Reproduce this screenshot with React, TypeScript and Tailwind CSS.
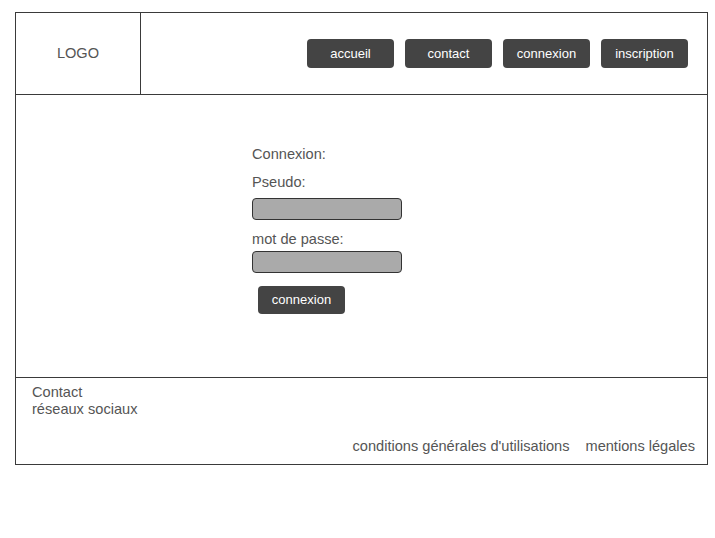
const font = { fontFamily: '"Liberation Sans", Arial, sans-serif' };

const navItems = ["accueil", "contact", "connexion", "inscription"];

function DarkButton({ label }: { label: string }) {
  return (
    <button className="h-[29px] w-[87px] rounded-[4px] bg-[#444444] text-[13px] text-white">
      {label}
    </button>
  );
}

export default function App() {
  return (
    <div className="min-h-screen bg-white pl-[15px] pt-[12px]" style={font}>
      <div className="w-[693px] border border-[#3a3a3a] text-[#555555]">
        {/* Header */}
        <header className="flex h-[82px] border-b border-[#3a3a3a]">
          <div className="flex w-[125px] items-center justify-center border-r border-[#3a3a3a] text-[14.6px]">
            LOGO
          </div>
          <nav className="flex flex-1 items-center justify-end gap-[11px] pr-[19px]">
            {navItems.map((n) => (
              <DarkButton key={n} label={n} />
            ))}
          </nav>
        </header>

        {/* Login form */}
        <main className="h-[283px] border-b border-[#3a3a3a] pl-[236px] pt-[49px] text-[14.6px] leading-[20px]">
          <div>Connexion:</div>
          <div className="mt-[8px]">Pseudo:</div>
          <div className="mt-[6px] h-[22px] w-[150px] rounded-[4px] border border-[#333333] bg-[#aaaaaa]" />
          <div className="mt-[9px]">mot de passe:</div>
          <div className="mt-[2px] h-[22px] w-[150px] rounded-[4px] border border-[#333333] bg-[#aaaaaa]" />
          <div className="ml-[6px] mt-[13px]">
            <button className="h-[28px] w-[87px] rounded-[4px] bg-[#444444] text-[13px] text-white">
              connexion
            </button>
          </div>
        </main>

        {/* Footer */}
        <footer className="flex h-[86px] flex-col justify-between pb-[9px] pl-[16px] pr-[12px] pt-[6px] text-[14.6px] leading-[17px]">
          <div>
            <div>Contact</div>
            <div>réseaux sociaux</div>
          </div>
          <div className="flex justify-end gap-[16px]">
            <span>conditions générales d'utilisations</span>
            <span>mentions légales</span>
          </div>
        </footer>
      </div>
    </div>
  );
}
